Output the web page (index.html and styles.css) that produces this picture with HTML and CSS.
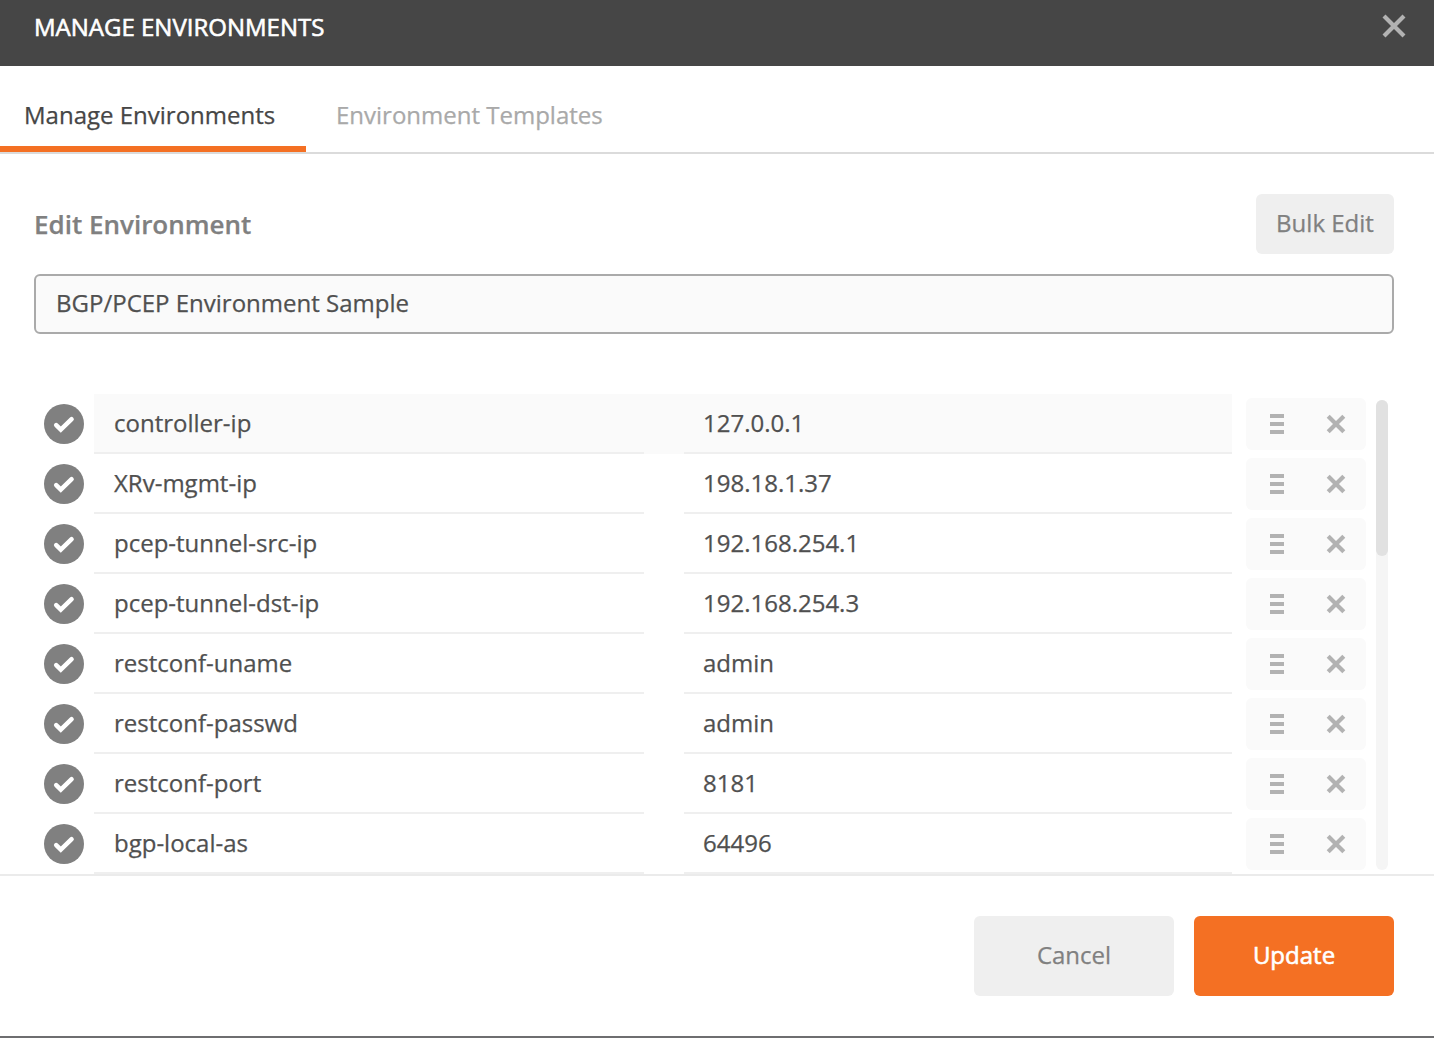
FILE: index.html
```html
<!DOCTYPE html>
<html lang="en">
<head>
<meta charset="utf-8">
<title>Manage Environments</title>
<link rel="stylesheet" href="styles.css">
</head>
<body>
<svg class="symbols" aria-hidden="true">
  <symbol id="check" viewBox="0 0 40 40"><circle cx="20" cy="20" r="20" fill="#808080"/><path d="M12.2 21.1l4.6 4.5L27.6 15.2" fill="none" stroke="#fff" stroke-width="4.5" stroke-linecap="round" stroke-linejoin="miter"/></symbol>
  <symbol id="menu" viewBox="0 0 14 20"><path d="M0 0h14v4H0zM0 8h14v4H0zM0 16h14v4H0z" fill="#b2b2b2"/></symbol>
  <symbol id="remove" viewBox="0 0 20 20"><path d="M2.2 2.2l15.6 15.6M17.8 2.2L2.2 17.8" fill="none" stroke="#b2b2b2" stroke-width="4.2"/></symbol>
</svg>
<div class="modal">
  <header class="header">
    <h1 class="title">MANAGE ENVIRONMENTS</h1>
    <svg class="close" viewBox="0 0 24 24"><path d="M2 2l20 20M22 2L2 22" fill="none" stroke="#b2b2b2" stroke-width="4.2"/></svg>
  </header>
  <nav class="tabs">
    <a class="tab active">Manage Environments</a>
    <a class="tab">Environment Templates</a>
  </nav>
  <main class="content">
    <div class="heading">
      <h2>Edit Environment</h2>
      <button class="btn bulk">Bulk Edit</button>
    </div>
    <div class="name-input">BGP/PCEP Environment Sample</div>
    <div class="editor">
      <div class="rows">
        <div class="row first"><svg class="check"><use href="#check"/></svg><div class="fields"><div class="cell key">controller-ip</div><div class="cell value">127.0.0.1</div></div><div class="actions"><svg class="menu"><use href="#menu"/></svg><svg class="remove"><use href="#remove"/></svg></div></div>
        <div class="row"><svg class="check"><use href="#check"/></svg><div class="fields"><div class="cell key">XRv-mgmt-ip</div><div class="cell value">198.18.1.37</div></div><div class="actions"><svg class="menu"><use href="#menu"/></svg><svg class="remove"><use href="#remove"/></svg></div></div>
        <div class="row"><svg class="check"><use href="#check"/></svg><div class="fields"><div class="cell key">pcep-tunnel-src-ip</div><div class="cell value">192.168.254.1</div></div><div class="actions"><svg class="menu"><use href="#menu"/></svg><svg class="remove"><use href="#remove"/></svg></div></div>
        <div class="row"><svg class="check"><use href="#check"/></svg><div class="fields"><div class="cell key">pcep-tunnel-dst-ip</div><div class="cell value">192.168.254.3</div></div><div class="actions"><svg class="menu"><use href="#menu"/></svg><svg class="remove"><use href="#remove"/></svg></div></div>
        <div class="row"><svg class="check"><use href="#check"/></svg><div class="fields"><div class="cell key">restconf-uname</div><div class="cell value">admin</div></div><div class="actions"><svg class="menu"><use href="#menu"/></svg><svg class="remove"><use href="#remove"/></svg></div></div>
        <div class="row"><svg class="check"><use href="#check"/></svg><div class="fields"><div class="cell key">restconf-passwd</div><div class="cell value">admin</div></div><div class="actions"><svg class="menu"><use href="#menu"/></svg><svg class="remove"><use href="#remove"/></svg></div></div>
        <div class="row"><svg class="check"><use href="#check"/></svg><div class="fields"><div class="cell key">restconf-port</div><div class="cell value">8181</div></div><div class="actions"><svg class="menu"><use href="#menu"/></svg><svg class="remove"><use href="#remove"/></svg></div></div>
        <div class="row"><svg class="check"><use href="#check"/></svg><div class="fields"><div class="cell key">bgp-local-as</div><div class="cell value">64496</div></div><div class="actions"><svg class="menu"><use href="#menu"/></svg><svg class="remove"><use href="#remove"/></svg></div></div>
      </div>
      <div class="track"><div class="thumb"></div></div>
    </div>
  </main>
  <footer class="footer">
    <button class="btn cancel">Cancel</button>
    <button class="btn update">Update</button>
  </footer>
</div>
</body>
</html>
```
FILE: styles.css
```css
* { box-sizing: border-box; }
body { margin: 0; background: #fff; color: #505050; font: 24px/32px "Open Sans", sans-serif; -webkit-text-stroke: 0.25px currentColor; }
.symbols { display: none; }
svg { display: block; flex: none; stroke-width: 0; }
.modal { height: 1038px; display: flex; flex-direction: column; border-bottom: 2px solid #6e6e70; overflow: hidden; }
.header { height: 66px; flex: none; display: flex; justify-content: space-between; align-items: flex-start; padding: 11px 28px 0 34px; background: #464646; color: #fff; }
.title { margin: 0; font-size: 24px; font-weight: 400; -webkit-text-stroke-width: 0.6px; }
.close { width: 24px; height: 24px; margin-top: 3px; }
.tabs { height: 88px; flex: none; display: flex; border-bottom: 2px solid #dbdbdb; }
.tab { height: 86px; padding: 33px 30px 0; color: #a9a9a9; }
.tab.active { width: 306px; padding-left: 24px; padding-right: 0; color: #464646; border-bottom: 6px solid #f47023; }
.content { height: 720px; flex: none; padding: 40px 40px 0 34px; }
.heading { height: 60px; display: flex; align-items: center; justify-content: space-between; }
h2 { margin: 0; font-size: 26px; line-height: 32px; font-weight: 600; color: #808080; }
.btn { border: 0; border-radius: 6px; padding: 0 0 2px; background: #efefef; color: #808080; font: inherit; text-align: center; }
.bulk { width: 138px; height: 60px; }
.name-input { height: 60px; margin-top: 20px; padding: 11px 20px; border: 2px solid #aaa; border-radius: 6px; background: #fafafa; }
.editor { height: 480px; margin-top: 60px; display: flex; padding-left: 10px; }
.rows { width: 1322px; }
.row { height: 60px; display: flex; }
.check { width: 40px; height: 40px; margin: 10px 10px 0 0; }
.fields { width: 1138px; display: flex; justify-content: space-between; }
.first .fields { background: #fafafa; }
.cell { border-bottom: 2px solid #efefef; padding: 13px 20px 0; }
.key { width: 550px; }
.value { width: 548px; padding-left: 19px; }
.actions { width: 120px; height: 52px; margin: 4px 0 0 14px; padding: 0 20px 0 24px; display: flex; align-items: center; justify-content: space-between; border-radius: 6px; background: #fafafa; }
.menu { width: 14px; height: 20px; }
.remove { width: 20px; height: 20px; }
.track { width: 12px; height: 470px; margin: 6px 0 0 10px; border-radius: 6px; background: #f5f5f5; }
.thumb { height: 156px; border-radius: 6px; background: #e1e1e1; }
.footer { flex: 1; display: flex; justify-content: flex-end; gap: 20px; padding: 40px 40px 0; border-top: 2px solid #ebebeb; }
.cancel, .update { width: 200px; height: 80px; }
.update { background: #f47023; color: #fff; -webkit-text-stroke-width: 0.6px; }
```
